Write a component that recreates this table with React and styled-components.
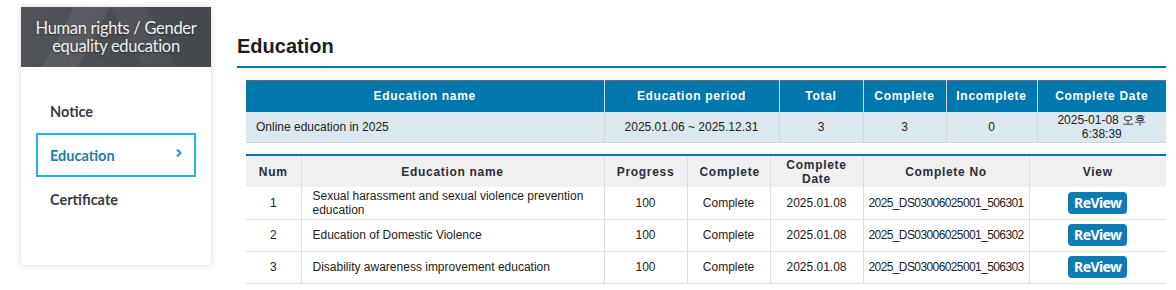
import React from "react";
import styled, { createGlobalStyle } from "styled-components";

const GlobalStyle = createGlobalStyle`
  html, body { margin: 0; padding: 0; background: #fff; }
  body { font-family: "Liberation Sans", Arial, sans-serif; color: #222; }
  * { box-sizing: border-box; }
`;

const Page = styled.div`
  display: flex;
  align-items: flex-start;
  padding: 7px 0 0 21px;
  width: 1176px;
`;

const Sidebar = styled.aside`
  width: 190px;
  height: 258px;
  background: #fff;
  box-shadow: 0 0 6px rgba(0, 0, 0, 0.16);
  display: flex;
  flex-direction: column;
`;

const SideHeader = styled.div`
  height: 60px;
  display: flex;
  align-items: center;
  justify-content: center;
  text-align: center;
  color: #f2f2f2;
  font-family: Lato, "Liberation Sans", sans-serif;
  font-size: 16.5px;
  letter-spacing: -0.3px;
  line-height: 18px;
  text-shadow: 0 1px 2px rgba(0, 0, 0, 0.5);
  background:
    linear-gradient(118deg, rgba(255,255,255,0) 24%, rgba(255,255,255,0.07) 24%, rgba(255,255,255,0.07) 40%, rgba(255,255,255,0) 40%),
    linear-gradient(62deg, rgba(255,255,255,0) 55%, rgba(255,255,255,0.04) 55%, rgba(255,255,255,0.04) 70%, rgba(255,255,255,0) 70%),
    linear-gradient(90deg, #505358, #44474c);
`;

const Menu = styled.ul`
  list-style: none;
  margin: 0;
  padding: 22px 15px 0 15px;
  display: flex;
  flex-direction: column;
`;

const MenuItem = styled.li`
  height: 44px;
  display: flex;
  align-items: center;
  justify-content: space-between;
  padding: 0 11px 0 12px;
  font-family: Lato, "Liberation Sans", sans-serif;
  font-weight: 700;
  font-size: 14.5px;
  color: ${(p) => (p.$active ? "#1a7fa8" : "#3a3a44")};
  border: 2px solid ${(p) => (p.$active ? "#22b4e4" : "transparent")};
`;

const Chevron = styled.svg`
  width: 8px;
  height: 10px;
  margin-top: -4px;
`;

const Main = styled.main`
  margin-left: 26px;
  width: 929px;
  padding-top: 27px;
`;

const Title = styled.h2`
  margin: 0;
  font-family: "Liberation Sans", Arial, sans-serif;
  font-weight: 700;
  font-size: 20px;
  line-height: 24px;
  color: #1e1e1e;
  padding-bottom: 8px;
  border-bottom: 2px solid #0077aa;
`;

const Table = styled.table`
  margin-left: 9px;
  width: 920px;
  table-layout: fixed;
  border-collapse: collapse;
  font-family: "Liberation Sans", Arial, sans-serif;
  font-size: 12px;
  letter-spacing: 0;
`;

const SummaryTable = styled(Table)`
  margin-top: 12px;
  border-top: 1px solid #6e6e6e;
`;

const ListTable = styled(Table)`
  margin-top: 11px;
  border-top: 2px solid #0077aa;
`;

const SumTh = styled.th`
  height: 31px;
  padding: 0 4px;
  background: #0077ad;
  color: #fff;
  font-weight: 700;
  letter-spacing: 0.7px;
  border-left: 1px solid #c9dbe6;
  &:first-child { border-left: none; }
`;

const SumTd = styled.td`
  height: 31px;
  padding: 0 5px;
  background: #dbe8f0;
  text-align: ${(p) => (p.$left ? "left" : "center")};
  padding-left: ${(p) => (p.$left ? "10px" : "5px")};
  line-height: 14px;
  border-left: 1px solid #d4d4d4;
  border-bottom: 1px solid #d4d4d4;
  &:first-child { border-left: none; }
`;

const ListTh = styled.th`
  height: 32px;
  padding: 0 12px;
  background: #f0f0f0;
  color: #2c2c38;
  font-weight: 700;
  letter-spacing: 0.7px;
  line-height: 14px;
  border-left: 1px solid #dedede;
  &:first-child { border-left: none; }
`;

const ListTd = styled.td`
  height: 32px;
  padding: 0 5px;
  text-align: ${(p) => (p.$left ? "left" : "center")};
  padding-left: ${(p) => (p.$left ? "11px" : "5px")};
  line-height: 14px;
  letter-spacing: ${(p) => (p.$tight ? "-0.6px" : "0")};
  border-left: 1px solid #dedede;
  border-bottom: 1px solid #dedede;
  &:first-child { border-left: none; }
`;

const ReviewButton = styled.button`
  width: 59px;
  height: 22px;
  border: none;
  border-radius: 4px;
  background: #0f7bb4;
  color: #fff;
  font-family: "Noto Sans", "Liberation Sans", sans-serif;
  font-weight: 700;
  font-size: 14px;
  letter-spacing: -0.6px;
  padding: 0;
  line-height: 22px;
  cursor: pointer;
`;

const rows = [
  { num: 1, name: "Sexual harassment and sexual violence prevention education", no: "2025_DS03006025001_506301" },
  { num: 2, name: "Education of Domestic Violence", no: "2025_DS03006025001_506302" },
  { num: 3, name: "Disability awareness improvement education", no: "2025_DS03006025001_506303" },
];

export default function App() {
  return (
    <>
      <GlobalStyle />
      <Page>
        <Sidebar>
          <SideHeader>
            Human rights / Gender
            <br />
            equality education
          </SideHeader>
          <Menu>
            <MenuItem>Notice</MenuItem>
            <MenuItem $active>
              Education
              <Chevron viewBox="0 0 8 10">
                <path d="M2 1.5 L5.5 5 L2 8.5" fill="none" stroke="#1ea3d4" strokeWidth="2.2" />
              </Chevron>
            </MenuItem>
            <MenuItem>Certificate</MenuItem>
          </Menu>
        </Sidebar>
        <Main>
          <Title>Education</Title>
          <SummaryTable>
            <colgroup>
              <col style={{ width: 358 }} />
              <col style={{ width: 175 }} />
              <col style={{ width: 84 }} />
              <col style={{ width: 83 }} />
              <col style={{ width: 91 }} />
              <col style={{ width: 129 }} />
            </colgroup>
            <thead>
              <tr>
                <SumTh>Education name</SumTh>
                <SumTh>Education period</SumTh>
                <SumTh>Total</SumTh>
                <SumTh>Complete</SumTh>
                <SumTh>Incomplete</SumTh>
                <SumTh>Complete Date</SumTh>
              </tr>
            </thead>
            <tbody>
              <tr>
                <SumTd $left>Online education in 2025</SumTd>
                <SumTd>2025.01.06 ~ 2025.12.31</SumTd>
                <SumTd>3</SumTd>
                <SumTd>3</SumTd>
                <SumTd>0</SumTd>
                <SumTd>2025-01-08 오후 6:38:39</SumTd>
              </tr>
            </tbody>
          </SummaryTable>
          <ListTable>
            <colgroup>
              <col style={{ width: 55 }} />
              <col style={{ width: 303 }} />
              <col style={{ width: 83 }} />
              <col style={{ width: 83 }} />
              <col style={{ width: 93 }} />
              <col style={{ width: 166 }} />
              <col style={{ width: 137 }} />
            </colgroup>
            <thead>
              <tr>
                <ListTh>Num</ListTh>
                <ListTh>Education name</ListTh>
                <ListTh>Progress</ListTh>
                <ListTh>Complete</ListTh>
                <ListTh>Complete Date</ListTh>
                <ListTh>Complete No</ListTh>
                <ListTh>View</ListTh>
              </tr>
            </thead>
            <tbody>
              {rows.map((r) => (
                <tr key={r.num}>
                  <ListTd>{r.num}</ListTd>
                  <ListTd $left>{r.name}</ListTd>
                  <ListTd>100</ListTd>
                  <ListTd>Complete</ListTd>
                  <ListTd>2025.01.08</ListTd>
                  <ListTd $tight>{r.no}</ListTd>
                  <ListTd>
                    <ReviewButton>ReView</ReviewButton>
                  </ListTd>
                </tr>
              ))}
            </tbody>
          </ListTable>
        </Main>
      </Page>
    </>
  );
}
